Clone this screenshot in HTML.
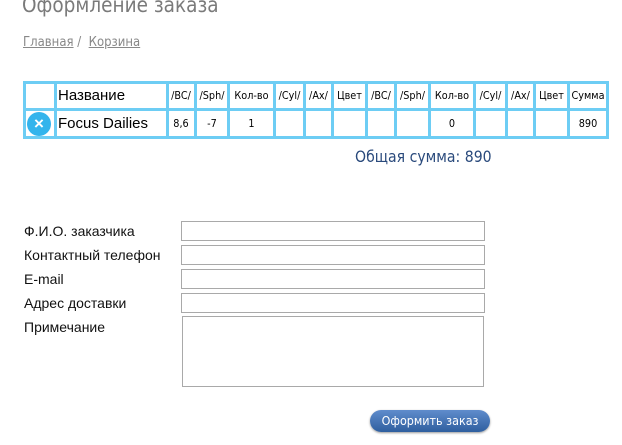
<!DOCTYPE html>
<html><head><meta charset="utf-8"><style>
body{margin:0;width:622px;height:445px;background:#fff;position:relative;overflow:hidden;font-family:"Liberation Sans","DejaVu Sans",sans-serif;}
.a{position:absolute}
.h{position:absolute;background:#6dcdf4;height:3px}
.v{position:absolute;background:#6dcdf4;width:3px;top:81px;height:58px}
.c{position:absolute;text-align:center;font-size:11px;color:#000;font-family:"DejaVu Sans",sans-serif;transform:scaleX(.88)}
.lbl{position:absolute;left:24px;font-size:14px;color:#111}
.in{position:absolute;left:181px;width:302px;height:18px;border:1px solid #a9a9a9;background:#fff}
</style></head><body>
<div class="a" style="left:22px;top:-7px;font-size:21px;color:#7a7a7a;font-family:'DejaVu Sans',sans-serif;transform:scaleX(.88);transform-origin:left">Оформление заказа</div>
<div class="a" style="left:23px;top:35px;font-size:13px;color:#888;font-family:'DejaVu Sans',sans-serif;transform:scaleX(.9);transform-origin:left"><span style="text-decoration:underline">Главная</span> / &nbsp;<span style="text-decoration:underline">Корзина</span></div>

<div class="h" style="left:23px;top:81px;width:586px"></div>
<div class="h" style="left:23px;top:108px;width:586px"></div>
<div class="h" style="left:23px;top:136px;width:586px"></div>
<div class="v" style="left:23px"></div><div class="v" style="left:54px"></div><div class="v" style="left:166px"></div><div class="v" style="left:194px"></div><div class="v" style="left:227px"></div><div class="v" style="left:273px"></div><div class="v" style="left:303px"></div><div class="v" style="left:331px"></div><div class="v" style="left:365px"></div><div class="v" style="left:394px"></div><div class="v" style="left:428px"></div><div class="v" style="left:473px"></div><div class="v" style="left:505px"></div><div class="v" style="left:533px"></div><div class="v" style="left:567px"></div><div class="v" style="left:606px"></div>

<div class="a" style="left:58px;top:87px;font-size:15px">Название</div>
<div class="a" style="left:58px;top:115px;font-size:15px">Focus Dailies</div>
<div class="a" style="left:27px;top:112px;width:24px;height:24px;border-radius:50%;background:#33b4ec;color:#fff;font-size:17px;font-weight:bold;text-align:center;line-height:24px">×</div>

<div class="c" style="left:167px;width:28px;top:89px">/BC/</div>
<div class="c" style="left:196px;width:32px;top:89px">/Sph/</div>
<div class="c" style="left:229px;width:45px;top:89px">Кол-во</div>
<div class="c" style="left:275px;width:29px;top:89px">/Cyl/</div>
<div class="c" style="left:305px;width:27px;top:89px">/Ax/</div>
<div class="c" style="left:333px;width:33px;top:89px">Цвет</div>
<div class="c" style="left:367px;width:28px;top:89px">/BC/</div>
<div class="c" style="left:396px;width:33px;top:89px">/Sph/</div>
<div class="c" style="left:430px;width:44px;top:89px">Кол-во</div>
<div class="c" style="left:475px;width:31px;top:89px">/Cyl/</div>
<div class="c" style="left:507px;width:27px;top:89px">/Ax/</div>
<div class="c" style="left:535px;width:33px;top:89px">Цвет</div>
<div class="c" style="left:569px;width:38px;top:89px">Сумма</div>

<div class="c" style="left:167px;width:28px;top:117px">8,6</div>
<div class="c" style="left:196px;width:32px;top:117px">-7</div>
<div class="c" style="left:229px;width:45px;top:117px">1</div>
<div class="c" style="left:430px;width:44px;top:117px">0</div>
<div class="c" style="left:569px;width:38px;top:117px">890</div>

<div class="a" style="left:355px;top:147px;font-size:16px;color:#2a4a7c;font-family:'DejaVu Sans',sans-serif;transform:scaleX(.88);transform-origin:left">Общая сумма: 890</div>

<div class="lbl" style="top:223px">Ф.И.О. заказчика</div>
<div class="lbl" style="top:247px">Контактный телефон</div>
<div class="lbl" style="top:271px">E-mail</div>
<div class="lbl" style="top:295px">Адрес доставки</div>
<div class="lbl" style="top:319px">Примечание</div>
<div class="in" style="top:221px"></div>
<div class="in" style="top:245px"></div>
<div class="in" style="top:269px"></div>
<div class="in" style="top:293px"></div>
<div class="in" style="top:316px;left:182px;width:300px;height:69px"></div>

<div class="a" style="left:370px;top:410px;width:120px;height:22px;border-radius:11px;background:linear-gradient(#5f8ccc,#2f5f9f);box-shadow:0 1px 2px #999;color:#fff;font-size:12px;text-align:center;line-height:22px;font-family:'DejaVu Sans',sans-serif;"><span style="display:inline-block;transform:scaleX(.93)">Оформить заказ</span></div>
</body></html>
